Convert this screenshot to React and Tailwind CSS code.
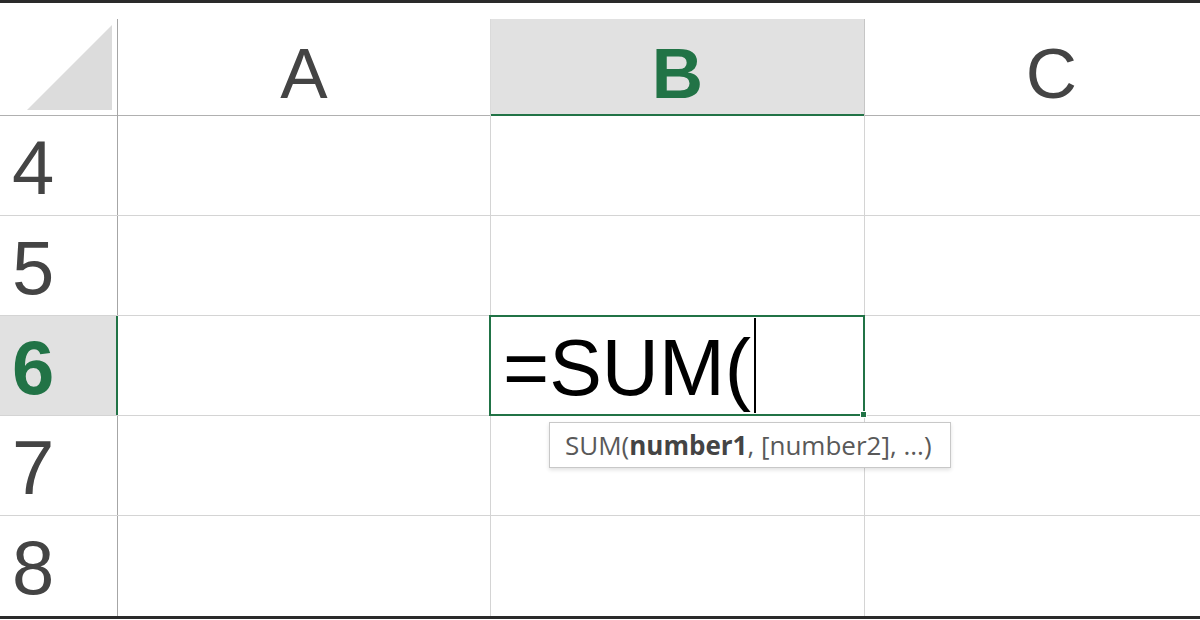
const cols = 'grid grid-cols-[118px_373px_374px_374px]';

const Corner = () => (
    <div className="border-r border-[#a6a6a6] relative">
        <svg width="118" height="97" className="block">
            <polygon points="27,91 112,6 112,91" fill="#dcdcdc" />
        </svg>
    </div>
);

const ColHeader = ({ label, active }) => (
    <div
        className={`flex justify-center pt-[19px] leading-none text-[71px] border-r ${active
            ? 'bg-[#e1e1e1] text-[#217346] font-bold border-[#c6c6c6] shadow-[inset_0_-2px_0_#217346]'
            : 'text-[#444] border-[#dadada]'
            }`}
    >
        {label}
    </div>
);

const Row = ({ n, active, children, last }) => (
    <div className={`${cols} h-[100px] ${last ? '' : 'border-b border-[#d4d4d4]'}`}>
        <div
            className={`pl-[12px] pt-[14px] leading-none text-[76px] ${active
                ? 'bg-[#e1e1e1] text-[#217346] font-bold shadow-[inset_-2px_0_0_#217346]'
                : 'text-[#444] border-r border-[#a6a6a6]'
                }`}
        >
            {n}
        </div>
        <div className="border-r border-[#d4d4d4]" />
        <div className="border-r border-[#d4d4d4] relative">{children}</div>
        <div />
    </div>
);

export default function App() {
    return (
        <div className="w-[1200px] h-[620px] bg-white overflow-hidden font-['Liberation_Sans',Arial,sans-serif]">
            <div className="border-t-[3px] border-[#2a2a2a]" />
            <div className="h-4" />
            <div className={`${cols} h-[97px] border-b border-[#b0b0b0]`}>
                <Corner />
                <ColHeader label="A" />
                <ColHeader label="B" active />
                <ColHeader label="C" />
            </div>
            <Row n="4" />
            <Row n="5" />
            <Row n="6" active>
                {/* selected cell */}
                <div className="absolute -top-px -left-[2px] -right-px -bottom-px border-2 border-[#217346] flex items-start pl-[12px] z-10">
                    <span className="mt-[11px] leading-none text-[79px] text-black">=SUM(</span>
                    <span className="ml-[3px] mt-[1px] w-[2px] h-[95px] bg-black" />
                    <span className="absolute -right-[4px] -bottom-[4px] w-[7px] h-[7px] bg-[#217346] border border-white" />
                </div>
                <div className="absolute top-[106px] left-[58px] z-20 w-[402px] h-[46px] bg-white border border-[#c8c8c8] shadow-[0_2px_4px_rgba(0,0,0,0.12)] flex items-center pl-[15px] font-['Open_Sans',sans-serif] text-[26px] text-[#595959] whitespace-nowrap">
                    SUM(<b className="font-bold text-[#444]">number1</b>, [number2], ...)
                </div>
            </Row>
            <Row n="7" />
            <Row n="8" last />
            <div className="border-t-[3px] border-[#2a2a2a]" />
        </div>
    );
}
